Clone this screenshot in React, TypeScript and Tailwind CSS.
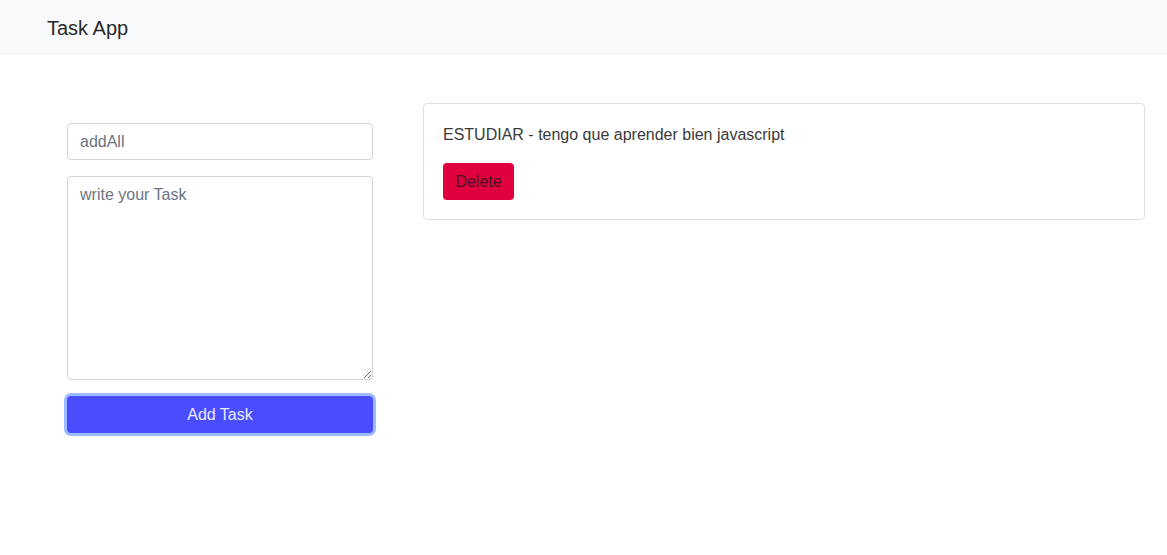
import { useState } from "react";

export default function App() {
  const [title, setTitle] = useState("");
  const [desc, setDesc] = useState("");
  const [tasks, setTasks] = useState([
    { id: 1, title: "ESTUDIAR", description: "tengo que aprender bien javascript" },
  ]);

  const addTask = () => {
    if (!title.trim()) return;
    setTasks([...tasks, { id: Date.now(), title, description: desc }]);
    setTitle("");
    setDesc("");
  };

  return (
    <div className="min-h-[555px] bg-white text-[#212529] font-['Liberation_Sans',Arial,sans-serif]">
      <nav className="flex h-[55px] items-center bg-[#f8f9fa] pl-[47px]">
        <span className="text-[20px] leading-[30px] text-[#2a2a2a]">Task App</span>
      </nav>

      <main className="flex items-start pt-[48px]">
        <div className="ml-[67px] mt-[20px] flex w-[306px] flex-col">
          <input
            value={title}
            onChange={(e) => setTitle(e.target.value)}
            placeholder="addAll"
            className="h-[37px] w-full rounded-[4px] border border-[#ced4da] px-[12px] text-[16px] placeholder:text-[#6c757d] outline-none"
          />
          <textarea
            value={desc}
            onChange={(e) => setDesc(e.target.value)}
            placeholder="write your Task"
            className="mt-[16px] h-[204px] w-full rounded-[4px] border border-[#ced4da] px-[12px] py-[6px] text-[16px] leading-[24px] placeholder:text-[#6c757d] outline-none"
          />
          <button
            onClick={addTask}
            className="mt-[16px] h-[37px] w-full rounded-[4px] bg-[#4a4dff] text-[16px] text-[#e8eaff] ring-[3px] ring-[#9dbcff]"
          >
            Add Task
          </button>
        </div>

        <div className="ml-[50px] flex w-[722px] flex-col gap-4">
          {tasks.map((t) => (
            <div
              key={t.id}
              className="rounded-[4px] border border-[#e0e0e0] px-[19px] pt-[19px] pb-[19px]"
            >
              <p className="text-[16px] leading-[24px] text-[#3a3a3a]">
                {t.title} - {t.description}
              </p>
              <button
                onClick={() => setTasks(tasks.filter((x) => x.id !== t.id))}
                className="mt-[16px] h-[37px] w-[71px] rounded-[4px] bg-[#e0003d] text-[16px] text-[#4a1026]"
              >
                Delete
              </button>
            </div>
          ))}
        </div>
      </main>
    </div>
  );
}
